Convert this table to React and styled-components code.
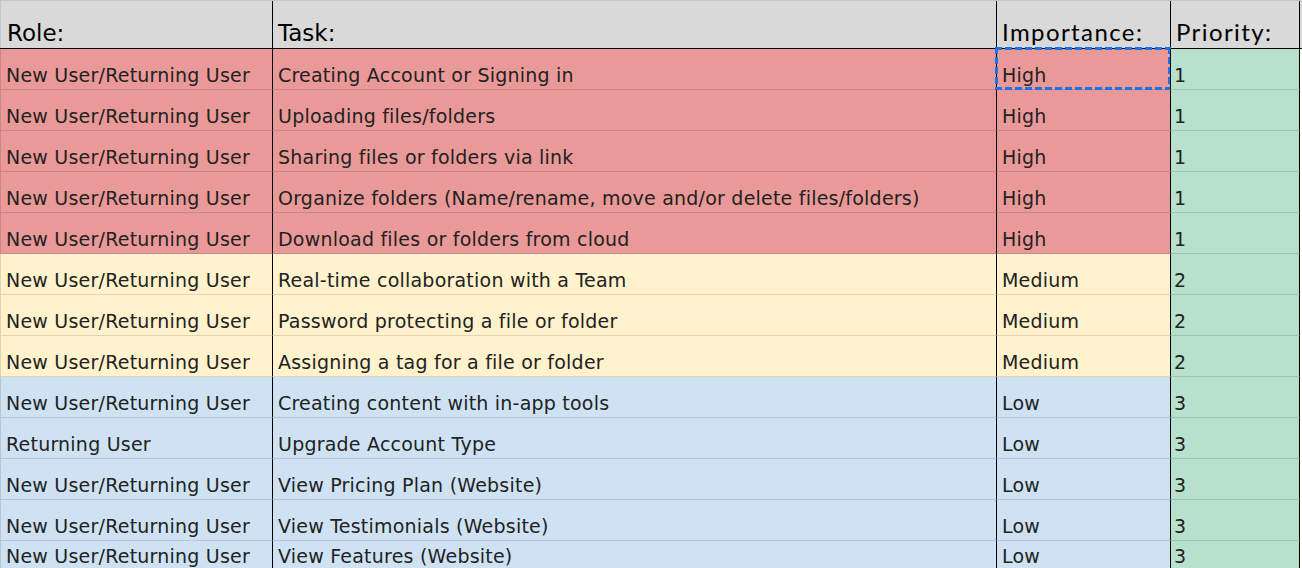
import React from 'react';
import styled, {createGlobalStyle} from 'styled-components';

const GlobalStyle = createGlobalStyle`
  html, body {
    margin: 0;
    padding: 0;
    background: #ffffff;
    overflow: hidden;
  }
`;

const fills = {
    high: '#ea9999',
    medium: '#fff2cc',
    low: '#cfe2f3',
};

const rows = [
    {role: 'New User/Returning User', task: 'Creating Account or Signing in', importance: 'High', priority: 1, level: 'high', selected: true},
    {role: 'New User/Returning User', task: 'Uploading files/folders', importance: 'High', priority: 1, level: 'high'},
    {role: 'New User/Returning User', task: 'Sharing files or folders via link', importance: 'High', priority: 1, level: 'high'},
    {role: 'New User/Returning User', task: 'Organize folders (Name/rename, move and/or delete files/folders)', importance: 'High', priority: 1, level: 'high'},
    {role: 'New User/Returning User', task: 'Download files or folders from cloud', importance: 'High', priority: 1, level: 'high'},
    {role: 'New User/Returning User', task: 'Real-time collaboration with a Team', importance: 'Medium', priority: 2, level: 'medium'},
    {role: 'New User/Returning User', task: 'Password protecting a file or folder', importance: 'Medium', priority: 2, level: 'medium'},
    {role: 'New User/Returning User', task: 'Assigning a tag for a file or folder', importance: 'Medium', priority: 2, level: 'medium'},
    {role: 'New User/Returning User', task: 'Creating content with in-app tools', importance: 'Low', priority: 3, level: 'low'},
    {role: 'Returning User', task: 'Upgrade Account Type', importance: 'Low', priority: 3, level: 'low'},
    {role: 'New User/Returning User', task: 'View Pricing Plan (Website)', importance: 'Low', priority: 3, level: 'low'},
    {role: 'New User/Returning User', task: 'View Testimonials (Website)', importance: 'Low', priority: 3, level: 'low'},
    {role: 'New User/Returning User', task: 'View Features (Website)', importance: 'Low', priority: 3, level: 'low', short: true},
];

const App = () => {
    return (
        <>
            <GlobalStyle/>
            <Sheet>
                <HeaderRow>
                    <HeadCell>Role:</HeadCell>
                    <HeadCell $dark>Task:</HeadCell>
                    <HeadCell $dark $round>Importance:</HeadCell>
                    <HeadCell $dark $round>Priority:</HeadCell>
                </HeaderRow>
                {rows.map((row, index) => (
                    <Row key={index} $short={row.short}>
                        <Cell $fill={fills[row.level]}>{row.role}</Cell>
                        <Cell $fill={fills[row.level]} $dark>{row.task}</Cell>
                        <Cell $fill={fills[row.level]} $dark>
                            {row.importance}
                            {row.selected && <Selection/>}
                        </Cell>
                        <Cell $fill="#b7e1cd" $dark $pad={3}>{row.priority}</Cell>
                    </Row>
                ))}
            </Sheet>
        </>
    );
};

const columns = '272px 724px 174px 130px 1fr';

const Sheet = styled.div`
  width: 1302px;
  height: 568px;
  overflow: hidden;
  display: flex;
  flex-direction: column;
  border-top: 1px solid #c6c6c6;
  box-sizing: border-box;
`;

const HeaderRow = styled.div`
  display: grid;
  grid-template-columns: ${columns};
  height: 48px;
  flex-shrink: 0;
  background: #d9d9d9;
  border-bottom: 1px solid #000;
  box-sizing: border-box;
`;

const HeadCell = styled.div`
  display: flex;
  align-items: flex-end;
  padding: 0 0 2px ${p => (p.$dark ? 5 : 6)}px;
  border-left: 1px solid ${p => (p.$dark ? '#000' : '#c6c6c6')};
  font-family: ${p => (p.$round ? '"Lato"' : '"DejaVu Sans"')}, sans-serif;
  font-size: ${p => (p.$round ? 24 : 23)}px;
  letter-spacing: ${p => (p.$round ? 1.4 : 0)}px;
  color: #000;
  white-space: nowrap;
  box-sizing: border-box;

  &:last-child {
    border-right: 1px solid #000;
  }
`;

const Row = styled.div`
  display: grid;
  grid-template-columns: ${columns};
  height: ${p => (p.$short ? 30 : 41)}px;
  flex-shrink: 0;
`;

const Cell = styled.div`
  position: relative;
  display: flex;
  align-items: flex-end;
  padding: 0 0 3px ${p => p.$pad || 5}px;
  background: ${p => p.$fill};
  border-left: 1px solid ${p => (p.$dark ? '#000' : 'rgba(0, 0, 0, 0.12)')};
  border-bottom: 1px solid rgba(0, 0, 0, 0.12);
  font-family: "DejaVu Sans", sans-serif;
  font-size: 19px;
  letter-spacing: 0.22px;
  color: #222;
  white-space: nowrap;
  box-sizing: border-box;

  &:nth-child(4) {
    border-right: 1px solid #000;
  }
`;

const dash = '#1a73e8';

const Selection = styled.div`
  position: absolute;
  top: -2px;
  left: -2px;
  right: -1px;
  bottom: -1px;
  pointer-events: none;
  background:
    repeating-linear-gradient(90deg, ${dash} 0 7px, transparent 7px 10px) top left / 100% 3px no-repeat,
    repeating-linear-gradient(90deg, ${dash} 0 7px, transparent 7px 10px) bottom left / 100% 3px no-repeat,
    repeating-linear-gradient(180deg, ${dash} 0 7px, transparent 7px 10px) top left / 3px 100% no-repeat,
    repeating-linear-gradient(180deg, ${dash} 0 7px, transparent 7px 10px) top right / 3px 100% no-repeat;
`;

export default App;
